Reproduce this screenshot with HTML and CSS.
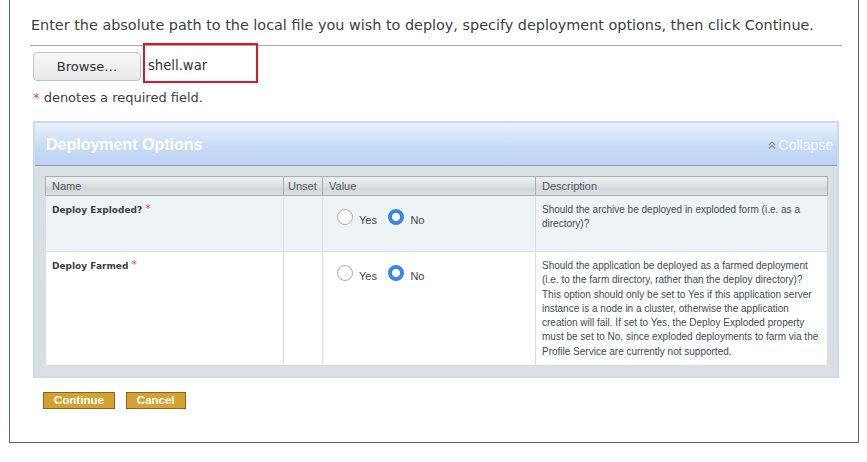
FILE: index.html
```html
<!DOCTYPE html>
<html>
<head>
<meta charset="utf-8">
<link rel="stylesheet" href="styles.css">
</head>
<body>
<div class="page">
  <div class="intro">Enter the absolute path to the local file you wish to deploy, specify deployment options, then click Continue.</div>
  <div class="file-row">
    <button class="browse">Browse…</button>
    <div class="file-name">shell.war</div>
  </div>
  <div class="req"><span class="star">*</span> denotes a required field.</div>

  <div class="panel">
    <div class="panel-head">
      <span class="panel-title">Deployment Options</span>
      <span class="collapse"><svg class="collapse-icon" width="8" height="8" viewBox="0 0 8 8"><polyline points="1,4 4,1 7,4" fill="none" stroke="#7f8d9b" stroke-width="1.2"/><polyline points="1,7.5 4,4.5 7,7.5" fill="none" stroke="#7f8d9b" stroke-width="1.2"/></svg>Collapse</span>
    </div>
    <div class="panel-body">
      <table class="opts">
        <thead>
          <tr>
            <th class="c-name">Name</th>
            <th class="c-unset">Unset</th>
            <th class="c-value">Value</th>
            <th class="c-desc">Description</th>
          </tr>
        </thead>
        <tbody>
          <tr class="row-alt row-short">
            <td class="name">Deploy Exploded? <span class="star">*</span></td>
            <td></td>
            <td class="value">
              <label class="opt"><input type="radio" name="exploded"><span>Yes</span></label>
              <label class="opt"><input type="radio" name="exploded" checked><span>No</span></label>
            </td>
            <td class="desc">Should the archive be deployed in exploded form (i.e. as a directory)?</td>
          </tr>
          <tr>
            <td class="name">Deploy Farmed <span class="star">*</span></td>
            <td></td>
            <td class="value">
              <label class="opt"><input type="radio" name="farmed"><span>Yes</span></label>
              <label class="opt"><input type="radio" name="farmed" checked><span>No</span></label>
            </td>
            <td class="desc">Should the application be deployed as a farmed deployment (i.e. to the farm directory, rather than the deploy directory)? This option should only be set to Yes if this application server instance is a node in a cluster, otherwise the application creation will fail. If set to Yes, the Deploy Exploded property must be set to No, since exploded deployments to farm via the Profile Service are currently not supported.</td>
          </tr>
        </tbody>
      </table>
    </div>
  </div>

  <div class="actions">
    <button class="btn">Continue</button>
    <button class="btn">Cancel</button>
  </div>
</div>
</body>
</html>
```

FILE: styles.css
```css
html, body {
  margin: 0;
  padding: 0;
  background: #ffffff;
}

body {
  font-family: "DejaVu Sans", sans-serif;
  color: #3a3f44;
}

.page {
  margin-left: 9px;
  width: 850px;
  box-sizing: border-box;
  border: 1px solid #5d666a;
  border-top: none;
  padding: 15px 16px 33px 20px;
}

.intro {
  font-size: 14.4px;
  line-height: 20px;
  padding-left: 1px;
  padding-bottom: 10px;
  border-bottom: 1px solid #a3abb2;
  color: #3b4045;
}

.file-row {
  display: flex;
  align-items: flex-start;
  margin-top: -3px;
}

.browse {
  margin: 9px 0 0 3px;
  width: 108px;
  height: 29px;
  box-sizing: border-box;
  border: 1px solid #c4c4c4;
  border-radius: 4px;
  background: linear-gradient(#f8f8f8, #e8e8e8);
  font-family: "DejaVu Sans", sans-serif;
  font-size: 13px;
  color: #2f3336;
  padding: 0;
}

.file-name {
  margin-left: 2px;
  width: 115px;
  height: 40px;
  box-sizing: border-box;
  border: 2px solid #e4151f;
  padding: 11px 0 0 3px;
  font-size: 13.2px;
  line-height: 20px;
  color: #2f3336;
}

.req {
  margin: 6px 0 0 3px;
  font-size: 13px;
  line-height: 18px;
  color: #3a3f44;
}

.star {
  color: #e0465a;
}

.panel {
  margin: 14px 3px 0 3px;
  border: 2px solid #c8dbf3;
}

.panel-head {
  height: 42px;
  border-bottom: 1px solid #8e9dab;
  background: linear-gradient(#e9f1fd, #c8dbf6 55%, #bcd3f4);
  display: flex;
  align-items: center;
  justify-content: space-between;
  padding: 0 4px 0 11px;
  font-family: "Liberation Sans", Arial, sans-serif;
}

.panel-title {
  font-size: 16px;
  font-weight: bold;
  color: #ffffff;
  padding-top: 2px;
}

.collapse {
  font-size: 14px;
  color: #f3f7fd;
  display: flex;
  align-items: center;
  padding-top: 2px;
}

.collapse-icon {
  margin-right: 3px;
}

.panel-body {
  background: #d9dfe3;
  padding: 10px 9px 10px 10px;
}

.opts {
  width: 100%;
  border-collapse: collapse;
  font-family: "Liberation Sans", Arial, sans-serif;
  background: #ffffff;
}

.opts th {
  height: 19px;
  padding: 0 0 0 6px;
  box-sizing: border-box;
  text-align: left;
  font-weight: normal;
  font-size: 11px;
  color: #4e5862;
  background: linear-gradient(#eef0f1, #d2d7da 65%, #dfe3e5);
  border: 1px solid #a9b1b7;
}

.c-name { width: 238px; }
.c-unset { width: 39px; padding-left: 4px !important; }
.c-value { width: 213px; }

.opts td {
  border: 1px solid #d8dee3;
  vertical-align: top;
  padding: 0;
}

.row-alt td {
  background: #eef3f6;
}

.row-short {
  height: 56px;
}

.name {
  font-family: "DejaVu Sans", sans-serif;
  font-weight: bold;
  font-size: 9px;
  line-height: 13px;
  color: #3b4046;
  padding: 8px 0 0 6px !important;
}

.name .star {
  font-weight: normal;
  font-size: 11px;
  line-height: 0;
  vertical-align: 1px;
}

.value {
  padding: 13px 0 0 14px !important;
  white-space: nowrap;
}

.opt {
  display: inline-flex;
  align-items: flex-end;
  margin-right: 7px;
}

.opt input {
  appearance: none;
  -webkit-appearance: none;
  margin: 0 6px 2px 0;
  width: 16px;
  height: 16px;
  box-sizing: border-box;
  border: 1px solid #b3b0ad;
  border-radius: 50%;
  background: #ffffff;
}

.opt input:checked {
  border: 4.5px solid #3b85e4;
}

.opt span {
  font-size: 11px;
  line-height: 13px;
  color: #3f454b;
}

.desc {
  font-size: 10px;
  line-height: 14.3px;
  color: #444a50;
  padding: 7px 6px 6px 6px !important;
}

.actions {
  display: flex;
  gap: 11px;
  margin: 14px 0 0 13px;
}

.btn {
  height: 17px;
  box-sizing: border-box;
  padding: 0 10px;
  border: 1px solid #8a6512;
  background: #d4a133;
  color: #ffffff;
  font-family: "Liberation Sans", Arial, sans-serif;
  font-weight: bold;
  font-size: 11.5px;
  line-height: 15px;
}
```
